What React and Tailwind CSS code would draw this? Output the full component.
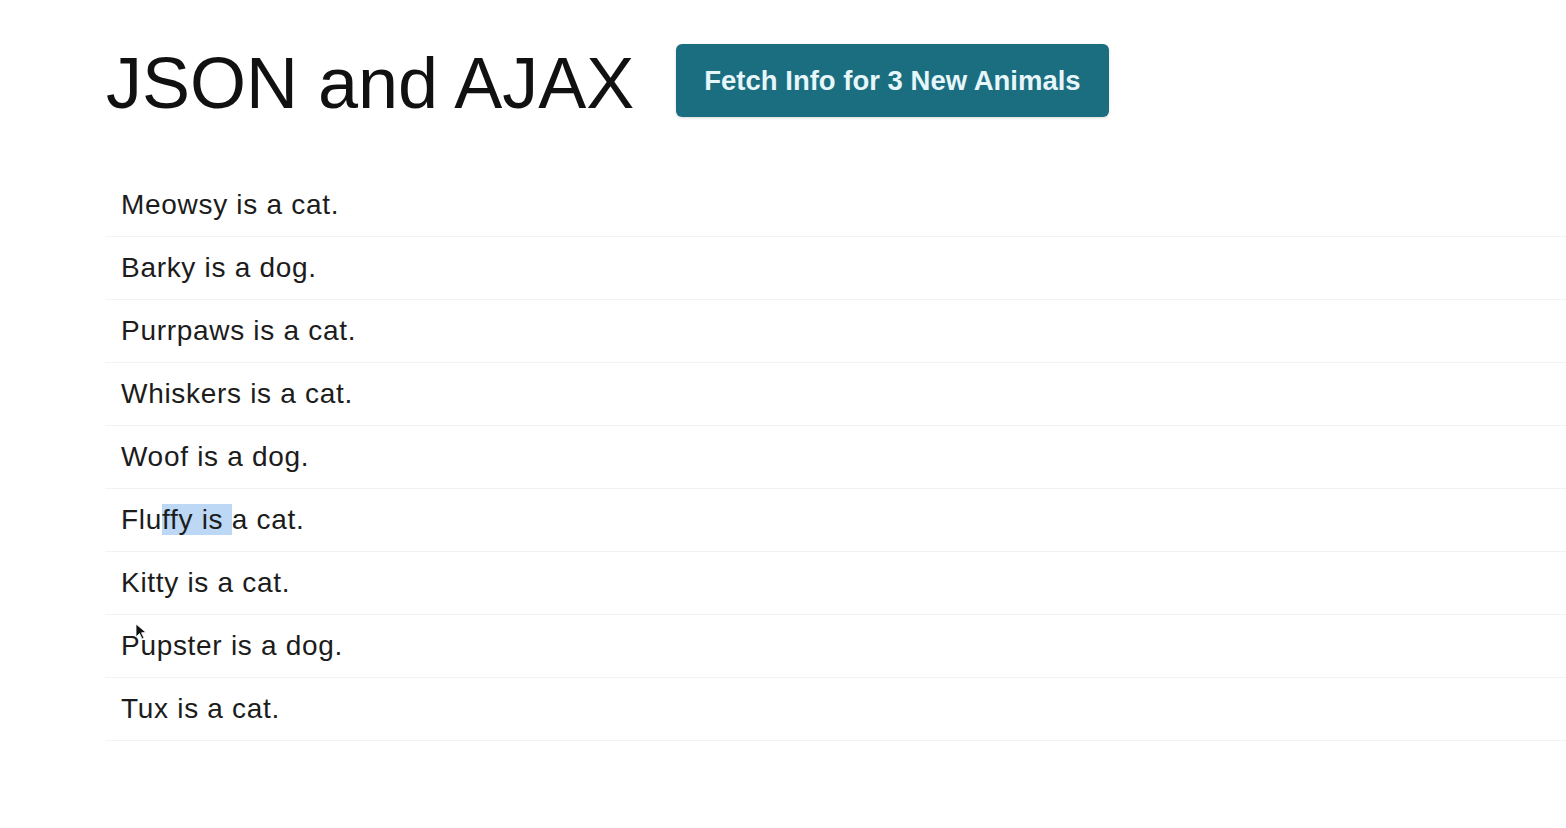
import React from 'react';

const animals = [
  { name: 'Meowsy', species: 'cat' },
  { name: 'Barky', species: 'dog' },
  { name: 'Purrpaws', species: 'cat' },
  { name: 'Whiskers', species: 'cat' },
  { name: 'Woof', species: 'dog' },
  { name: 'Fluffy', species: 'cat' },
  { name: 'Kitty', species: 'cat' },
  { name: 'Pupster', species: 'dog' },
  { name: 'Tux', species: 'cat' },
];

function Row({ animal }) {
  // the reference has part of "Fluffy is" selected
  if (animal.name === 'Fluffy') {
    return (
      <span className="whitespace-pre">
        Flu<span className="bg-[#bdd8f4]">ffy is </span>a cat.
      </span>
    );
  }
  if (animal.name === 'Pupster') {
    return (
      <span className="relative">
        Pupster is a dog.
        {/* mouse pointer */}
        <svg
          className="absolute left-[14px] top-[-2px]"
          width="12"
          height="18"
          viewBox="0 0 12 18"
        >
          <path d="M1 1 L1 14 L4.5 10.5 L7 16 L9 15 L6.5 9.8 L11 9.5 Z" fill="#111" stroke="#fff" strokeWidth="0.8" />
        </svg>
      </span>
    );
  }
  return (
    <span>
      {animal.name} is a {animal.species}.
    </span>
  );
}

export default function App() {
  return (
    <div className="min-h-[828px] w-full bg-white font-['Liberation_Sans',Arial,sans-serif] text-[#1a1a1a]">
      {/* Header */}
      <div className="flex items-start pl-[106px] pt-[47px]">
        <h1 className="text-[72px] leading-[72px] font-normal text-[#111]">
          JSON and AJAX
        </h1>
        <button className="ml-[42px] mt-[-3px] h-[73px] rounded-[6px] bg-[#1b6e80] px-[28px] text-[27.5px] font-bold tracking-[0px] text-[#e6f6fa] shadow-[0_1px_3px_rgba(0,0,0,0.15)]">
          Fetch Info for 3 New Animals
        </button>
      </div>

      {/* Animal list */}
      <div className="mt-[55px] ml-[105px]">
        {animals.map((animal) => (
          <div
            key={animal.name}
            className="flex h-[63px] items-center border-b border-[#f2f2f2] pl-[16px] text-[28px] tracking-[0.7px] text-[#1c1c1c]"
          >
            <Row animal={animal} />
          </div>
        ))}
      </div>
    </div>
  );
}
